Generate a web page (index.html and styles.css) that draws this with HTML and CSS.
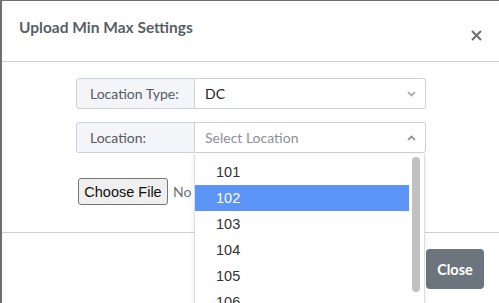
FILE: index.html
```html
<!DOCTYPE html>
<html lang="en">
<head>
    <meta charset="UTF-8">
    <title>Upload Min Max Settings</title>
    <link rel="stylesheet" href="styles.css">
</head>
<body>
    <div class="modal">
        <div class="modal-header">
            <h5 class="modal-title">Upload Min Max Settings</h5>
            <button class="close-x" title="Close">
                <svg width="11" height="11" viewBox="0 0 11 11"><path d="M1 1L10 10M10 1L1 10" stroke="#6f6f6f" stroke-width="2"/></svg>
            </button>
        </div>
        <div class="modal-body">
            <div class="form-box">
                <div class="input-group">
                    <span class="addon">Location Type:</span>
                    <div class="select">
                        <span class="value">DC</span>
                        <svg class="chev" width="9" height="6" viewBox="0 0 9 6"><path d="M1 1L4.5 4.5L8 1" fill="none" stroke="#a3a3a3" stroke-width="1.6"/></svg>
                    </div>
                </div>
                <div class="input-group open">
                    <span class="addon">Location:</span>
                    <div class="select">
                        <span class="value placeholder">Select Location</span>
                        <svg class="chev" width="9" height="6" viewBox="0 0 9 6"><path d="M1 5L4.5 1.5L8 5" fill="none" stroke="#8a8a8a" stroke-width="1.6"/></svg>
                        <div class="dropdown">
                            <ul class="options">
                                <li>101</li>
                                <li class="active">102</li>
                                <li>103</li>
                                <li>104</li>
                                <li>105</li>
                                <li>106</li>
                            </ul>
                            <div class="scroll-track"><div class="thumb"></div></div>
                        </div>
                    </div>
                </div>
                <div class="file-row">
                    <button class="file-btn">Choose File</button>
                    <span class="file-name">No file chosen</span>
                </div>
            </div>
        </div>
        <div class="modal-footer">
            <button class="btn-close">Close</button>
        </div>
    </div>
</body>
</html>
```

FILE: styles.css
```css
body {
    margin: 0;
    background: #6e6f72;
    font-family: 'Lato', 'Open Sans', Arial, sans-serif;
    overflow: hidden;
    height: 303px;
}
.modal {
    background: #fff;
    margin: 1px 0 0 2px;
    height: 320px;
}
.modal-header {
    height: 61px;
    border-bottom: 1px solid #cfcfcf;
    display: flex;
    align-items: flex-start;
    justify-content: space-between;
    box-sizing: border-box;
    padding: 0 17px 0 17px;
}
.modal-title {
    margin: 17px 0 0 0;
    font-size: 15.5px;
    font-weight: bold;
    color: #5a5f66;
}
.close-x {
    background: none;
    border: none;
    padding: 0;
    margin-top: 28px;
    width: 11px;
    height: 11px;
    cursor: pointer;
}
.modal-body {
    padding: 16px 0 27px 74px;
}
.form-box {
    width: 350px;
}
.input-group {
    display: flex;
    height: 31px;
    margin-bottom: 13px;
    font-size: 14px;
}
.addon {
    width: 119px;
    box-sizing: border-box;
    background: #f4f5f9;
    border: 1px solid #cdd1d8;
    border-radius: 3px 0 0 3px;
    padding-left: 13px;
    display: flex;
    align-items: center;
    color: #555a60;
}
.select {
    position: relative;
    flex: 1;
    border: 1px solid #cdd1d8;
    border-left: none;
    border-radius: 0 3px 3px 0;
    display: flex;
    align-items: center;
    justify-content: space-between;
    padding: 0 9px 0 10px;
}
.value {
    color: #222;
}
.placeholder {
    color: #8d8f94;
}
.dropdown {
    position: absolute;
    top: 31px;
    left: -1px;
    width: 231px;
    height: 170px;
    background: #fff;
    border: 1px solid #dcdcdc;
    border-top: none;
    box-sizing: border-box;
    display: flex;
    box-shadow: 0 2px 6px rgba(0,0,0,0.08);
    z-index: 10;
}
.options {
    list-style: none;
    margin: 0;
    padding: 5px 0 0 0;
    flex: 1;
    font-family: 'Liberation Sans', Arial, sans-serif;
    font-size: 14.5px;
    color: #333;
}
.options li {
    height: 26px;
    line-height: 26px;
    padding-left: 21px;
}
.options li.active {
    background: #5b93f6;
    color: #fff;
}
.scroll-track {
    width: 15px;
    padding: 3px 0 0 3px;
    box-sizing: border-box;
}
.thumb {
    width: 8px;
    height: 135px;
    background: #c1c1c1;
    border-radius: 4px;
}
.file-row {
    display: flex;
    align-items: center;
    margin-top: 25px;
    padding-left: 2px;
}
.file-btn {
    font-family: 'Liberation Sans', Arial, sans-serif;
    font-size: 14.5px;
    height: 27px;
    width: 90px;
    padding: 0;
    background: #efefef;
    border: 1px solid #767676;
    border-radius: 3px;
    color: #111;
}
.file-name {
    margin-left: 5px;
    width: 21px;
    overflow: hidden;
    white-space: nowrap;
    font-size: 14px;
    color: #6c7075;
}
.modal-footer {
    border-top: 1px solid #cfcfcf;
    display: flex;
    justify-content: flex-end;
    padding: 16px 15px;
}
.btn-close {
    width: 58px;
    height: 40px;
    background: #6c757d;
    color: #fff;
    border: none;
    border-radius: 4px;
    font-family: 'Lato', Arial, sans-serif;
    font-weight: bold;
    font-size: 14.5px;
}
```
